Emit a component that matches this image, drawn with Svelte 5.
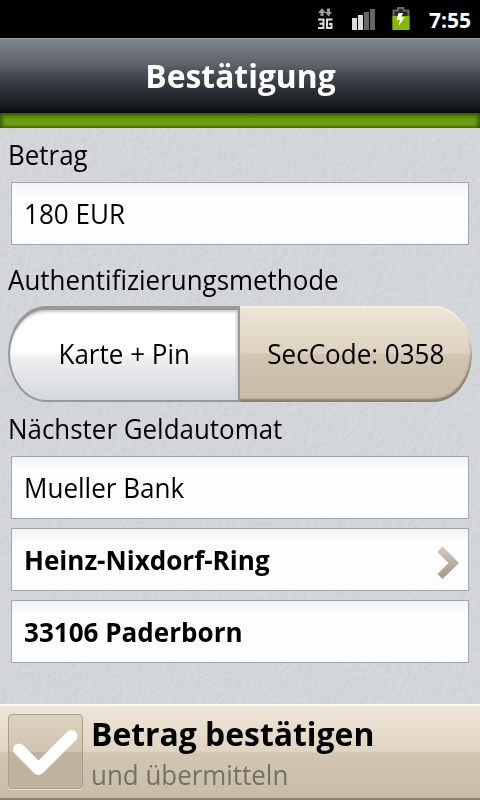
<script>
  const address = [
    { text: 'Mueller Bank', bold: false, arrow: false },
    { text: 'Heinz-Nixdorf-Ring', bold: true, arrow: true },
    { text: '33106 Paderborn', bold: true, arrow: false }
  ];
</script>

<div class="screen">
  <svg class="texture" width="480" height="800" aria-hidden="true">
    <filter id="paper" x="0" y="0" width="100%" height="100%">
      <feTurbulence type="fractalNoise" baseFrequency="0.2" numOctaves="3" seed="4" />
      <feDiffuseLighting lighting-color="#fff" surfaceScale="1.5" diffuseConstant="1">
        <feDistantLight azimuth="225" elevation="60" />
      </feDiffuseLighting>
    </filter>
    <rect width="480" height="800" filter="url(#paper)" opacity="0.14" />
  </svg>

  <div class="status">
    <svg class="net" width="18" height="24" viewBox="0 0 18 24">
      <path d="M5 0 9 5H6.500V8H3.500V5H1z M11.500 8.500 8 4H10V0.500H13V4H15z" fill="#999" />
      <path d="M1 11.500H6.500V20H1M2.500 15.700H6.500M15.500 11.500H10V20H14.500V16H12" fill="none" stroke="#ddd" stroke-width="2" />
    </svg>
    <svg class="signal" width="24" height="22" viewBox="0 0 24 22">
      <path d="M0 9h5v12H0zM6 6h5v15H6z" fill="#ddd" />
      <path d="M12 3h5v18h-5zM18 0h5v21h-5z" fill="#666" />
    </svg>
    <svg class="battery" width="18" height="24" viewBox="0 0 18 24">
      <path d="M0.500 2.500H5V0H12.500V2.500H17.500V23H0.500z" fill="#666" />
      <path d="M2.500 4.500H7V2H10.500V4.500H15.500V9H2.500z" fill="#292929" />
      <path d="M0.500 9H17.500V23H0.500z" fill="#86b800" />
      <path d="M6.500 6H11L9.500 10H13L6.500 19 8 13H4.500z" fill="#fff" />
    </svg>
    <span class="time">7:55</span>
  </div>

  <header><h1>Bestätigung</h1></header>
  <div class="stripe"></div>

  <main>
    <div class="label amount">Betrag</div>
    <div class="field"><span>180 EUR</span></div>

    <div class="label auth">Authentifizierungsmethode</div>
    <div class="segment">
      <div class="option active"><span>Karte + Pin</span></div>
      <div class="option idle"><span>SecCode: 0358</span></div>
    </div>

    <div class="label atm">Nächster Geldautomat</div>
    <div class="fields">
      {#each address as row}
        <div class="field" class:bold={row.bold}>
          <span>{row.text}</span>
          {#if row.arrow}
            <svg class="arrow" width="24" height="34" viewBox="0 0 24 34">
              <defs>
                <linearGradient id="arrowFill" x1="0" y1="0" x2="0" y2="1">
                  <stop offset="0" stop-color="#d0c8bb" />
                  <stop offset="1" stop-color="#a2998b" />
                </linearGradient>
              </defs>
              <path d="M5.500 0.500 22 17 5.500 33 0.500 28 11.500 17 0.500 6z" fill="url(#arrowFill)" />
            </svg>
          {/if}
        </div>
      {/each}
    </div>
  </main>

  <footer>
    <div class="check">
      <svg width="76" height="76" viewBox="0 0 76 76">
        <path d="M11 35.500 30.500 55 63.500 22" fill="none" stroke="#fff" stroke-width="12" stroke-linecap="round" stroke-linejoin="round" />
      </svg>
    </div>
    <div class="action">
      <div class="primary">Betrag bestätigen</div>
      <div class="secondary">und übermitteln</div>
    </div>
  </footer>
</div>

<style>
  .screen {
    position: relative;
    width: 480px;
    height: 800px;
    overflow: hidden;
    display: flex;
    flex-direction: column;
    background: #ced2d6;
    color: #000;
    font: 27px/36px "Open Sans", "Noto Sans", sans-serif;
    white-space: nowrap;
  }
  .texture { position: absolute; inset: 0; }
  .status, header, .stripe, main, footer { position: relative; box-sizing: border-box; }
  .status {
    height: 38px;
    flex: none;
    display: flex;
    align-items: flex-start;
    background: #000;
    padding-left: 317px;
  }
  .net { margin-top: 8px; }
  .signal { margin: 9px 0 0 17px; }
  .battery { margin: 7px 0 0 16px; }
  .time {
    margin: 3px 0 0 19px;
    color: #fff;
    font-size: 21px;
    line-height: 34px;
    font-weight: 700;
  }
  header {
    height: 75px;
    flex: none;
    border-top: 1px solid #9aa2a8;
    background: linear-gradient(#7d878f, #5c6165 36%, #454b54 48%, #292f34 70%, #1b2125 85%, #101112 96%, #080a0b);
  }
  h1 {
    margin: 0;
    padding-left: 1px;
    text-align: center;
    color: #fff;
    font-size: 32px;
    line-height: 74px;
    font-weight: 700;
    transform: scaleX(0.994);
  }
  .stripe {
    height: 15px;
    flex: none;
    background: linear-gradient(#3b5a08, #558407 20%, #6a9c0d 45%, #6c9f10 75%, #568307 92%, #4a7302);
    box-shadow: inset 4px 0 4px -2px #34500a, inset -4px 0 4px -2px #34500a;
  }
  main { flex: 1; padding: 9px 8px 0; }
  /* Regular text is set slightly condensed */
  .label, .field span, .secondary { transform: scaleX(0.96); transform-origin: left; }
  .field span { transform: scaleX(0.965); }
  .option span { transform: scaleX(0.964); }
  .label { height: 36px; }
  .amount { margin-bottom: 9px; }
  .auth { margin: 17px 0 8px; }
  .atm { margin: 9px 0; }
  .field {
    box-sizing: border-box;
    height: 63px;
    margin: 0 3px;
    padding: 0 7px 0 12px;
    display: flex;
    align-items: center;
    justify-content: space-between;
    border: 1px solid #a3a5a8;
    background: linear-gradient(#f3f3f3, #fdfdfd 14px);
  }
  .fields { display: flex; flex-direction: column; gap: 9px; }
  .bold { font-weight: 700; }
  .arrow { margin-top: 7px; }
  .segment { display: flex; height: 96px; }
  .option {
    box-sizing: border-box;
    display: flex;
    align-items: center;
    justify-content: center;
  }
  .active {
    width: 232px;
    padding-bottom: 2px;
    border: 2px solid #98999b;
    border-top-width: 4px;
    border-radius: 38px 0 0 38px / 48px 0 0 48px;
    background: linear-gradient(#fff 47%, #eeeff1 53%, #d3d9dd);
    box-shadow: inset 0 3px 3px -1px #c9c9c9, inset -2px 0 2px #d5d5d5;
  }
  .idle {
    width: 232px;
    border-radius: 0 38px 38px 0 / 0 48px 48px 0;
    background: linear-gradient(#eee5d6, #ddd2bf 49%, #d1c5b1 51%, #c7bba6);
    box-shadow: inset 0 2px 1px #f5efe5, inset -1px -3px 2px #8b806f;
  }
  footer {
    height: 96px;
    flex: none;
    display: flex;
    padding: 10px 8px 0;
    border-top: 2px solid #fcf8f1;
    border-bottom: 2px solid #8d8372;
    background: linear-gradient(#f0e6d7, #e0d5c2 49%, #d2c7b3 51%, #c8bca7);
  }
  .check {
    box-sizing: border-box;
    width: 75px;
    height: 75px;
    margin-top: -2px;
    border: 1px solid #a89e8c;
    border-radius: 4px;
    background: linear-gradient(#ddd2bf, #cfc4b0 50%, #bfb39d 51%, #c0b49e);
    box-shadow: 0 1px 0 #ede4d4;
  }
  .check svg { display: block; margin: -1px; }
  .action { margin-left: 8px; }
  .primary {
    margin-top: -2px;
    font-size: 32px;
    line-height: 40px;
    font-weight: 700;
    transform: scaleX(0.996);
    transform-origin: left;
  }
  .secondary { color: #74706a; line-height: 38px; margin-top: 2px; }
</style>
